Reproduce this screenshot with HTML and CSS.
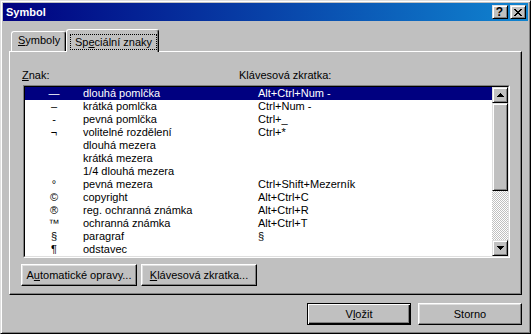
FILE: index.html
```html
<!DOCTYPE html>
<html lang="cs">
<head>
    <meta charset="UTF-8">
    <title>Symbol</title>
    <link rel="stylesheet" href="styles.css">
</head>
<body>
    <div class="window">
        <div class="titlebar">
            <span class="title">Symbol</span>
            <div class="caption-btns">
                <span class="cbtn help">?</span>
                <span class="cbtn">
                    <svg width="8" height="7" viewBox="0 0 8 7" shape-rendering="crispEdges"><path d="M0 0h2v1h-2zM6 0h2v1h-2zM1 1h2v1h-2zM5 1h2v1h-2zM2 2h4v1h-4zM3 3h2v1h-2zM2 4h4v1h-4zM1 5h2v1h-2zM5 5h2v1h-2zM0 6h2v1h-2zM6 6h2v1h-2z" fill="#000"/></svg>
                </span>
            </div>
        </div>

        <div class="main">
            <div class="tabs">
                <div class="tab"><u>S</u>ymboly</div>
                <div class="tab active"><span class="focus">Sp<u>e</u>ciální znaky</span></div>
            </div>

            <div class="panel">
                <div class="labels">
                    <span class="label-sym"><u>Z</u>nak:</span>
                    <span>Klávesová zkratka:</span>
                </div>

                <div class="listbox">
                    <div class="listbox-inner">
                        <div class="rows">
                            <div class="row selected"><span class="sym">—</span><span>dlouhá pomlčka</span><span>Alt+Ctrl+Num -</span></div>
                            <div class="row"><span class="sym">–</span><span>krátká pomlčka</span><span>Ctrl+Num -</span></div>
                            <div class="row"><span class="sym">-</span><span>pevná pomlčka</span><span>Ctrl+_</span></div>
                            <div class="row"><span class="sym">¬</span><span>volitelné rozdělení</span><span>Ctrl+*</span></div>
                            <div class="row"><span class="sym"></span><span>dlouhá mezera</span><span></span></div>
                            <div class="row"><span class="sym"></span><span>krátká mezera</span><span></span></div>
                            <div class="row"><span class="sym"></span><span>1/4 dlouhá mezera</span><span></span></div>
                            <div class="row"><span class="sym">°</span><span>pevná mezera</span><span>Ctrl+Shift+Mezerník</span></div>
                            <div class="row"><span class="sym">©</span><span>copyright</span><span>Alt+Ctrl+C</span></div>
                            <div class="row"><span class="sym">®</span><span>reg. ochranná známka</span><span>Alt+Ctrl+R</span></div>
                            <div class="row"><span class="sym">™</span><span>ochranná známka</span><span>Alt+Ctrl+T</span></div>
                            <div class="row"><span class="sym">§</span><span>paragraf</span><span>§</span></div>
                            <div class="row"><span class="sym">¶</span><span>odstavec</span><span></span></div>
                        </div>
                        <div class="scrollbar">
                            <div class="sb-btn">
                                <svg width="7" height="4" viewBox="0 0 7 4" shape-rendering="crispEdges"><path d="M3 0h1v1h-1zM2 1h3v1h-3zM1 2h5v1h-5zM0 3h7v1h-7z" fill="#000"/></svg>
                            </div>
                            <div class="sb-thumb"></div>
                            <div class="sb-track"></div>
                            <div class="sb-btn">
                                <svg width="7" height="4" viewBox="0 0 7 4" shape-rendering="crispEdges"><path d="M0 0h7v1h-7zM1 1h5v1h-5zM2 2h3v1h-3zM3 3h1v1h-1z" fill="#000"/></svg>
                            </div>
                        </div>
                    </div>
                </div>

                <div class="panel-btns">
                    <button class="btn wide">A<u>u</u>tomatické opravy...</button>
                    <button class="btn wide"><u>K</u>lávesová zkratka...</button>
                </div>
            </div>

            <div class="footer">
                <button class="btn default">V<u>l</u>ožit</button>
                <button class="btn">Storno</button>
            </div>
        </div>
    </div>
</body>
</html>
```

FILE: styles.css
```css
body {
    margin: 0;
    background: #c0c0c0;
    font-family: "Liberation Sans", Arial, sans-serif;
    font-size: 11px;
    color: #000;
}
u {
    text-decoration-thickness: 1px;
    text-underline-offset: 1px;
}
.window {
    box-sizing: border-box;
    width: 531px;
    height: 334px;
    background: #c0c0c0;
    border: 1px solid;
    border-color: #dfdfdf #000 #000 #dfdfdf;
    box-shadow: inset 1px 1px #fff, inset -1px -1px #808080;
    padding: 2px;
}
.titlebar {
    height: 18px;
    display: flex;
    align-items: center;
    justify-content: space-between;
    padding: 0 2px 0 3px;
    background: linear-gradient(to right, #000080, #1084d0);
}
.title {
    color: #fff;
    font-weight: bold;
    line-height: 18px;
}
.caption-btns {
    display: flex;
    gap: 2px;
}
.cbtn {
    box-sizing: border-box;
    width: 16px;
    height: 14px;
    background: #c0c0c0;
    border: 1px solid;
    border-color: #dfdfdf #000 #000 #dfdfdf;
    box-shadow: inset 1px 1px #fff, inset -1px -1px #808080;
    display: flex;
    align-items: center;
    justify-content: center;
    padding-right: 1px;
}
.cbtn.help {
    font-weight: bold;
    font-size: 12px;
    line-height: 12px;
}
.main {
    padding: 8px 6px 0 6px;
}
.tabs {
    display: flex;
    align-items: flex-end;
    height: 22px;
    padding-left: 2px;
}
.tab {
    box-sizing: border-box;
    width: 55px;
    height: 20px;
    border: 1px solid #fff;
    border-bottom: none;
    border-right-color: #000;
    border-radius: 3px 3px 0 0;
    box-shadow: inset -1px 0 #808080;
    padding: 2px 0 0 6px;
    line-height: 13px;
}
.tab.active {
    width: 93px;
    height: 23px;
    margin-bottom: -1px;
    padding: 4px 0 0 3px;
    position: relative;
    z-index: 1;
    background: #c0c0c0;
}
.focus {
    display: inline-block;
    border: 1px dotted #000;
    padding: 1px 4px 0 4px;
    line-height: 13px;
}
.panel {
    box-sizing: border-box;
    height: 244px;
    border: 1px solid;
    border-color: #fff #000 #000 #fff;
    box-shadow: inset -1px -1px #808080;
    padding: 17px 0 0 12px;
}
.labels {
    display: flex;
    height: 13px;
    line-height: 13px;
}
.label-sym {
    width: 217px;
}
.listbox {
    box-sizing: border-box;
    width: 487px;
    height: 173px;
    margin: 3px 0 0 1px;
    border: 1px solid;
    border-color: #808080 #fff #fff #808080;
}
.listbox-inner {
    box-sizing: border-box;
    height: 100%;
    display: flex;
    background: #fff;
    border: 1px solid;
    border-color: #000 #dfdfdf #dfdfdf #000;
}
.rows {
    flex: 1;
    overflow: hidden;
}
.row {
    display: grid;
    grid-template-columns: 58px 175px 1fr;
    height: 13px;
    line-height: 13px;
    white-space: nowrap;
}
.row .sym {
    text-align: center;
}
.row.selected {
    background: #000080;
    color: #fff;
}
.scrollbar {
    width: 16px;
    display: flex;
    flex-direction: column;
}
.sb-btn, .sb-thumb {
    box-sizing: border-box;
    background: #c0c0c0;
    border: 1px solid;
    border-color: #dfdfdf #000 #000 #dfdfdf;
    box-shadow: inset 1px 1px #fff, inset -1px -1px #808080;
}
.sb-btn {
    height: 16px;
    display: flex;
    align-items: center;
    justify-content: center;
}
.sb-thumb {
    height: 88px;
}
.sb-track {
    flex: 1;
    background: repeating-conic-gradient(#c0c0c0 0 25%, #fff 0 50%) 0 0 / 2px 2px;
}
.panel-btns {
    display: flex;
    gap: 4px;
    margin: 6px 0 0 -1px;
}
.btn {
    box-sizing: border-box;
    width: 104px;
    height: 22px;
    padding: 0;
    font-family: inherit;
    font-size: 11px;
    color: #000;
    background: #c0c0c0;
    border: 1px solid;
    border-color: #fff #000 #000 #fff;
    box-shadow: inset -1px -1px #808080, inset 1px 1px #dfdfdf;
}
.btn.wide {
    width: 116px;
}
.btn.default {
    border-color: #000;
    box-shadow: inset 1px 1px #fff, inset -1px -1px #000, inset -2px -2px #808080;
}
.footer {
    display: flex;
    justify-content: flex-end;
    gap: 7px;
    margin-top: 8px;
}
```
